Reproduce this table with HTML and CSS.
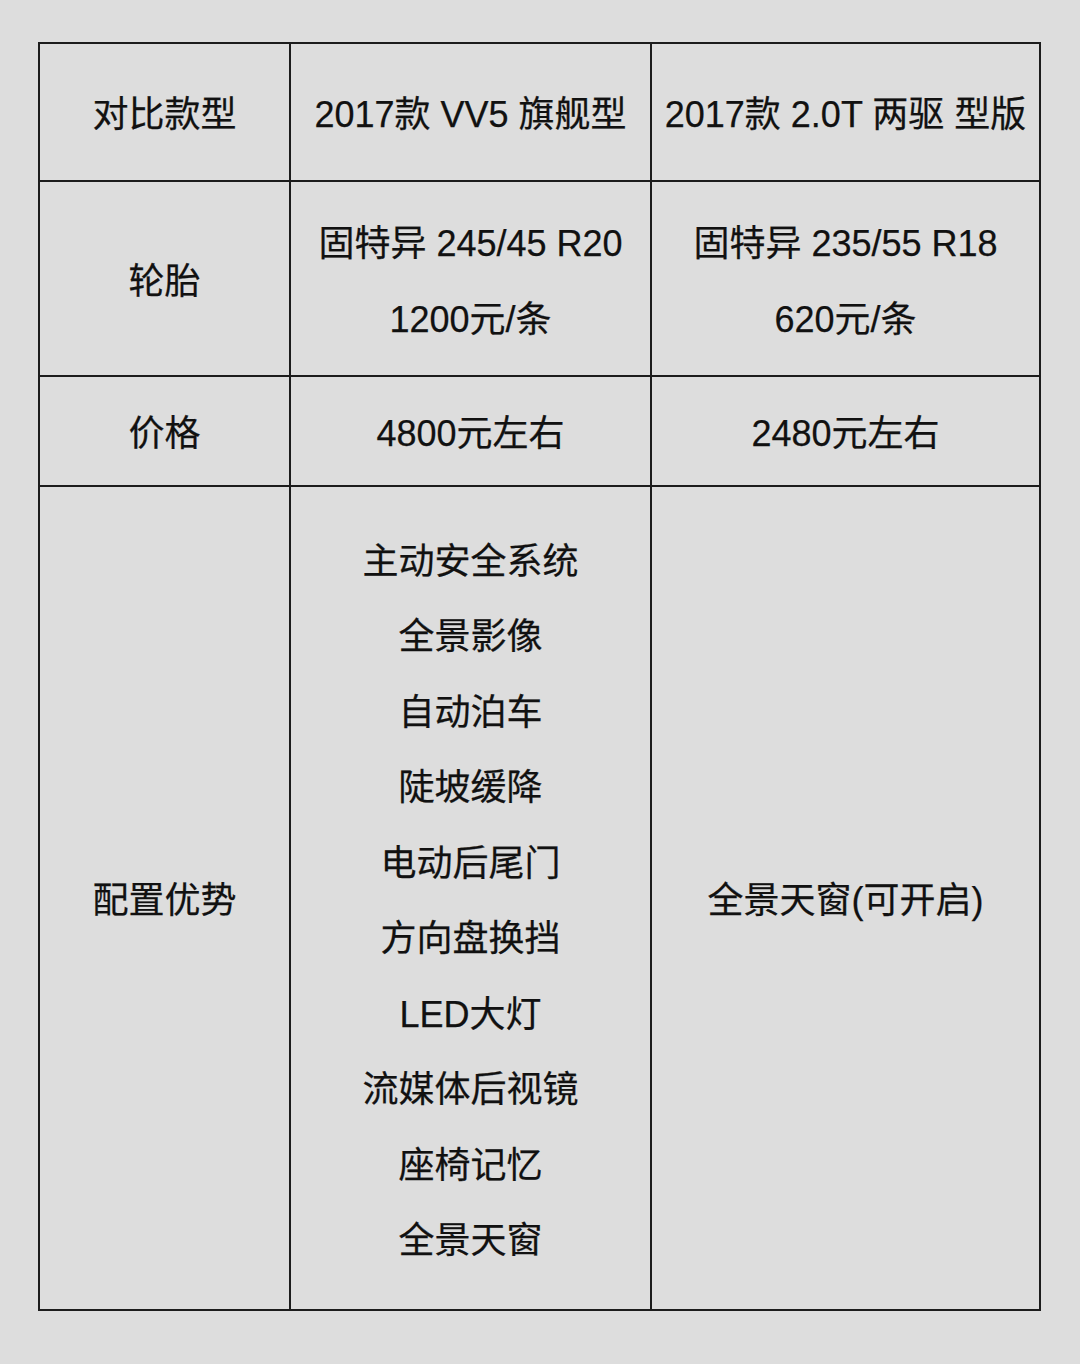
FILE: index.html
```html
<!DOCTYPE html>
<html lang="zh">
<head>
<meta charset="utf-8">
<link rel="stylesheet" href="styles.css">
</head>
<body>
<table class="cmp">
  <colgroup>
    <col class="c1"><col class="c2"><col class="c3">
  </colgroup>
  <tr class="r1">
    <td>对比款型</td>
    <td>2017款 VV5 旗舰型</td>
    <td>2017款 2.0T 两驱 型版</td>
  </tr>
  <tr class="r2">
    <td>轮胎</td>
    <td>固特异 245/45 R20<br>1200元/条</td>
    <td>固特异 235/55 R18<br>620元/条</td>
  </tr>
  <tr class="r3">
    <td>价格</td>
    <td>4800元左右</td>
    <td>2480元左右</td>
  </tr>
  <tr class="r4">
    <td>配置优势</td>
    <td>主动安全系统<br>全景影像<br>自动泊车<br>陡坡缓降<br>电动后尾门<br>方向盘换挡<br>LED大灯<br>流媒体后视镜<br>座椅记忆<br>全景天窗</td>
    <td>全景天窗(可开启)</td>
  </tr>
</table>
</body>
</html>
```
FILE: styles.css
```css
html, body {
  margin: 0;
  padding: 0;
  background: #dddddd;
}
body {
  padding: 42px 0 0 38px;
  font-family: "Liberation Sans", "Noto Sans CJK SC", sans-serif;
  color: #111111;
}
.cmp {
  border-collapse: collapse;
  table-layout: fixed;
  width: 1003px;
}
.cmp td {
  border: 2px solid #1c1c1c;
  text-align: center;
  vertical-align: middle;
  font-size: 36px;
  line-height: 75.5px;
  padding: 6px 0 0;
  white-space: nowrap;
  -webkit-text-stroke: 0.25px #111111;
}
.c1 { width: 251px; }
.c2 { width: 361px; }
.c3 { width: 389px; }
.r1 td { height: 130px; }
.r2 td { height: 187px; }
.r3 td { height: 102px; }
.r4 td { height: 816px; }
```
